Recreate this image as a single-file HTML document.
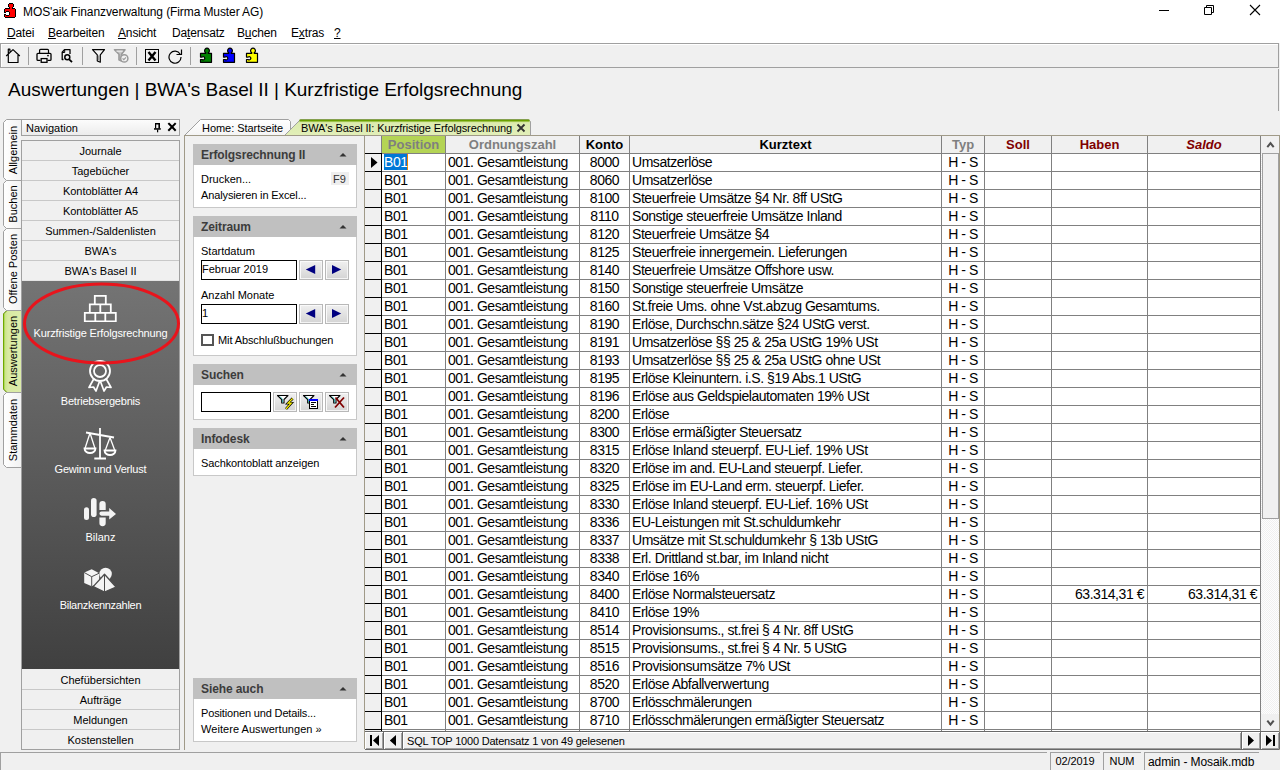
<!DOCTYPE html>
<html><head><meta charset="utf-8"><title>MOS'aik</title>
<style>
*{box-sizing:border-box;margin:0;padding:0}
html,body{width:1280px;height:770px;overflow:hidden;background:#f0f0f0;font-family:"Liberation Sans",sans-serif;color:#000}
.a{position:absolute}
.t{position:absolute;white-space:pre;line-height:1}
u{text-decoration:underline;text-decoration-thickness:1px;text-underline-offset:1px}
</style></head><body>

<div class="a" style="left:0;top:0;width:1280px;height:43px;background:#fff"></div>
<svg class="a" style="left:0;top:0" width="20" height="20" viewBox="0 0 20 20" shape-rendering="crispEdges"><path d="M5.5 8.5H9.5V7.5L8.5 6.5V4.5L9.5 3.5H12.5L13.5 4.5V6.5L12.5 7.5V8.5H14.5L15.5 9.5V16.5L14.5 17.5H5.5L4.5 16.5V14.5H5.5L6.5 15.5H8.5L9.5 14.5V12.5L8.5 11.5H6.5L5.5 12.5H4.5V9.5Z" fill="#f00" stroke="#000" stroke-width="1"/></svg>
<div class="t" style="left:23px;top:6px;font-size:12px;letter-spacing:-0.1px">MOS'aik Finanzverwaltung (Firma Muster AG)</div>
<div class="a" style="left:1159px;top:10px;width:10px;height:1px;background:#000"></div>
<svg class="a" style="left:1203px;top:4px" width="12" height="12" viewBox="0 0 12 12"><path d="M1.5 3.5h7v7h-7z M3.5 3.5v-2h7v7h-2" fill="none" stroke="#000" stroke-width="1"/></svg>
<svg class="a" style="left:1249px;top:4px" width="12" height="12" viewBox="0 0 12 12"><path d="M1 1L11 11M11 1L1 11" stroke="#000" stroke-width="1.1"/></svg>
<div class="t" style="left:7px;top:27px;font-size:12px;letter-spacing:-0.15px;line-height:13px"><u>D</u>atei</div>
<div class="t" style="left:48px;top:27px;font-size:12px;letter-spacing:-0.15px;line-height:13px"><u>B</u>earbeiten</div>
<div class="t" style="left:118px;top:27px;font-size:12px;letter-spacing:-0.15px;line-height:13px"><u>A</u>nsicht</div>
<div class="t" style="left:172px;top:27px;font-size:12px;letter-spacing:-0.15px;line-height:13px">Da<u>t</u>ensatz</div>
<div class="t" style="left:237px;top:27px;font-size:12px;letter-spacing:-0.15px;line-height:13px">B<u>u</u>chen</div>
<div class="t" style="left:291px;top:27px;font-size:12px;letter-spacing:-0.15px;line-height:13px">E<u>x</u>tras</div>
<div class="t" style="left:334px;top:27px;font-size:12px;letter-spacing:-0.15px;line-height:13px"><u>?</u></div>
<div class="a" style="left:0;top:43px;width:1279px;height:25px;border:1px solid #a0a0a0;background:#f0f0f0;box-shadow:inset 1px 1px #fff"></div>
<div class="a" style="left:28px;top:47px;width:1px;height:18px;background:#a0a0a0"></div>
<div class="a" style="left:82px;top:47px;width:1px;height:18px;background:#a0a0a0"></div>
<div class="a" style="left:136px;top:47px;width:1px;height:18px;background:#a0a0a0"></div>
<div class="a" style="left:190px;top:47px;width:1px;height:18px;background:#a0a0a0"></div>
<svg class="a" style="left:5px;top:48px" width="16" height="16" viewBox="0 0 16 16"><path d="M1.2 8L8 1.6 14.8 8 M3.3 6.2v8.3h9.7v-8.2 M3.3 6.2v-5h1.6v2.4" fill="none" stroke="#000" stroke-width="1.2" stroke-linejoin="round"/></svg>
<svg class="a" style="left:36px;top:48px" width="16" height="16" viewBox="0 0 16 16"><path d="M3.6 5.2V2.3a1 1 0 0 1 1-1h6.9a1 1 0 0 1 1 1v2.9" fill="none" stroke="#000" stroke-width="1.2"/><path d="M4.5 12.4H2a1 1 0 0 1-1-1V6.3a1 1 0 0 1 1-1h12a1 1 0 0 1 1 1v5.1a1 1 0 0 1-1 1h-2.5" fill="none" stroke="#000" stroke-width="1.3"/><rect x="5.2" y="10.6" width="5.8" height="3.7" fill="#fff" stroke="#000" stroke-width="1.3"/><circle cx="12" cy="7.6" r="0.9" fill="#000"/></svg>
<svg class="a" style="left:60px;top:48px" width="16" height="16" viewBox="0 0 16 16"><path d="M3.5 11.5H2.2V4.2L4.5 1.6H10V6" fill="none" stroke="#000" stroke-width="1.3" stroke-linejoin="round"/><path d="M2.2 4.5h2.5V1.6" fill="none" stroke="#000" stroke-width="1"/><circle cx="7.3" cy="9.3" r="2.5" fill="none" stroke="#000" stroke-width="1.5"/><path d="M9.2 11.3l2.8 2.8" stroke="#000" stroke-width="1.8"/></svg>
<svg class="a" style="left:91px;top:48px" width="16" height="16" viewBox="0 0 16 16"><path d="M1.5 1.6h12l-4.2 5.2v7.4l-3-1.2v-6.2z" fill="#f4f4f4" stroke="#000" stroke-width="1.2" stroke-linejoin="round"/><path d="M6.8 7.5h2v5.5l-2-0.8z" fill="#999"/></svg>
<svg class="a" style="left:113px;top:48px" width="16" height="16" viewBox="0 0 16 16"><path d="M1.5 1.8h10.5l-3.5 4.5v6.8l-2.5-1.2v-5.6z" fill="#c8c8c8" stroke="#9a9a9a" stroke-width="1.6" stroke-linejoin="round"/><path d="M3.5 3.2h6.2" stroke="#f0f0f0" stroke-width="1"/><circle cx="11.3" cy="10.4" r="3.6" fill="#f0f0f0" stroke="#9a9a9a" stroke-width="1.5"/><path d="M9.6 10.4l1.2 1.3 2.2-2.4" fill="none" stroke="#9a9a9a" stroke-width="1.1"/></svg>
<svg class="a" style="left:144px;top:48px" width="16" height="16" viewBox="0 0 16 16"><rect x="1.5" y="1.5" width="13" height="13" fill="none" stroke="#000" stroke-width="1"/><path d="M4.5 4l7 8.5M11.5 4l-7 8.5" stroke="#000" stroke-width="2.4"/></svg>
<svg class="a" style="left:167px;top:48px" width="16" height="16" viewBox="0 0 16 16"><path d="M13.2 6.2A6 6 0 1 0 14 9" fill="none" stroke="#000" stroke-width="1.2"/><path d="M14.5 1.5v5h-5" fill="none" stroke="#000" stroke-width="1.2"/></svg>
<svg class="a" style="left:199px;top:47px" width="14" height="17" viewBox="0 0 14 17"><path d="M1.5 6.3h5.3v-0.6a2.4 2.4 0 1 1 2.4 0v0.6h3.3v9h-11v-2.8h1.6a1.6 1.6 0 1 0 0-2.4h-1.6z" fill="#008000" stroke="#000" stroke-width="1.2" stroke-linejoin="round"/></svg>
<svg class="a" style="left:222px;top:47px" width="14" height="17" viewBox="0 0 14 17"><path d="M1.5 6.3h5.3v-0.6a2.4 2.4 0 1 1 2.4 0v0.6h3.3v9h-11v-2.8h1.6a1.6 1.6 0 1 0 0-2.4h-1.6z" fill="#0000ff" stroke="#000" stroke-width="1.2" stroke-linejoin="round"/></svg>
<svg class="a" style="left:245px;top:47px" width="14" height="17" viewBox="0 0 14 17"><path d="M1.5 6.3h5.3v-0.6a2.4 2.4 0 1 1 2.4 0v0.6h3.3v9h-11v-2.8h1.6a1.6 1.6 0 1 0 0-2.4h-1.6z" fill="#ffff00" stroke="#000" stroke-width="1.2" stroke-linejoin="round"/></svg>
<div class="t" style="left:8px;top:80px;font-size:19px;letter-spacing:-0.02px">Auswertungen | BWA's Basel II | Kurzfristige Erfolgsrechnung</div>
<div class="a" style="left:1278px;top:69px;width:1px;height:42px;background:#a0a0a0"></div>
<svg class="a" style="left:0;top:110px" width="24" height="370" viewBox="0 110 24 370"><defs><linearGradient id="vg" x1="0" x2="1"><stop offset="0" stop-color="#ffffff"/><stop offset="1" stop-color="#f2f2f2"/></linearGradient><linearGradient id="vga" x1="0" x2="1"><stop offset="0" stop-color="#c4e07a"/><stop offset="0.25" stop-color="#d8eaa2"/><stop offset="1" stop-color="#dcecaa"/></linearGradient></defs><path d="M21.5 119.5H6.5L3.5 122.5V177.5L6.5 180.5H21.5" fill="url(#vg)" stroke="#a0a0a0" stroke-width="1"/><path d="M21.5 180.5H6.5L3.5 183.5V225.5L6.5 228.5H21.5" fill="url(#vg)" stroke="#a0a0a0" stroke-width="1"/><path d="M21.5 228.5H6.5L3.5 231.5V307.5L6.5 310.5H21.5" fill="url(#vg)" stroke="#a0a0a0" stroke-width="1"/><path d="M21.5 392.5H6.5L3.5 395.5V464.5L6.5 467.5H21.5" fill="url(#vg)" stroke="#a0a0a0" stroke-width="1"/><path d="M21.5 310.5H6.5L3.5 313.5V389.5L6.5 392.5H21.5" fill="url(#vga)" stroke="#a0a0a0" stroke-width="1"/><path d="M6.5 311L3.5 314V389L6.5 392" fill="none" stroke="#70a800" stroke-width="1"/><path d="M4.5 314V389" fill="none" stroke="#b0d860" stroke-width="1"/></svg>
<div class="t" style="left:12.5px;top:149.5px;font-size:11px;transform:translate(-50%,-50%) rotate(-90deg);transform-origin:center;line-height:12px;">Allgemein</div>
<div class="t" style="left:12.5px;top:204.0px;font-size:11px;transform:translate(-50%,-50%) rotate(-90deg);transform-origin:center;line-height:12px;">Buchen</div>
<div class="t" style="left:12.5px;top:269.0px;font-size:11px;transform:translate(-50%,-50%) rotate(-90deg);transform-origin:center;line-height:12px;">Offene Posten</div>
<div class="t" style="left:12.5px;top:351.0px;font-size:11px;transform:translate(-50%,-50%) rotate(-90deg);transform-origin:center;line-height:12px;">Auswertungen</div>
<div class="t" style="left:12.5px;top:429.5px;font-size:11px;transform:translate(-50%,-50%) rotate(-90deg);transform-origin:center;line-height:12px;">Stammdaten</div>
<div class="a" style="left:21px;top:119px;width:159px;height:17px;border:1px solid #a0a0a0;background:linear-gradient(#fcfcfc,#ececec)"></div>
<div class="t" style="left:26px;top:123px;font-size:11px">Navigation</div>
<svg class="a" style="left:153px;top:122px" width="9" height="11" viewBox="0 0 9 11"><path d="M2 1h5v5.5h-1.6v-4h-2.2v4h-1.2z" fill="#000"/><rect x="1" y="6.2" width="6.8" height="1.5" fill="#000"/><rect x="4" y="7.5" width="1.2" height="2.8" fill="#000"/></svg>
<svg class="a" style="left:167px;top:122px" width="10" height="10" viewBox="0 0 10 10"><path d="M2 1.8l6 6.2M8 1.8l-6 6.2" stroke="#000" stroke-width="2" stroke-linecap="square"/></svg>
<div class="a" style="left:21px;top:140px;width:159px;height:610px;border:1px solid #a0a0a0;background:#f0f0f0"></div>
<div class="t" style="left:22px;top:146px;width:157px;text-align:center;font-size:11px">Journale</div>
<div class="a" style="left:22px;top:160px;width:157px;height:1px;background:#c8c8c8"></div>
<div class="t" style="left:22px;top:166px;width:157px;text-align:center;font-size:11px">Tagebücher</div>
<div class="a" style="left:22px;top:180px;width:157px;height:1px;background:#c8c8c8"></div>
<div class="t" style="left:22px;top:186px;width:157px;text-align:center;font-size:11px">Kontoblätter A4</div>
<div class="a" style="left:22px;top:200px;width:157px;height:1px;background:#c8c8c8"></div>
<div class="t" style="left:22px;top:206px;width:157px;text-align:center;font-size:11px">Kontoblätter A5</div>
<div class="a" style="left:22px;top:220px;width:157px;height:1px;background:#c8c8c8"></div>
<div class="t" style="left:22px;top:226px;width:157px;text-align:center;font-size:11px">Summen-/Saldenlisten</div>
<div class="a" style="left:22px;top:240px;width:157px;height:1px;background:#c8c8c8"></div>
<div class="t" style="left:22px;top:246px;width:157px;text-align:center;font-size:11px">BWA's</div>
<div class="a" style="left:22px;top:260px;width:157px;height:1px;background:#c8c8c8"></div>
<div class="t" style="left:22px;top:266px;width:157px;text-align:center;font-size:11px">BWA's Basel II</div>
<div class="a" style="left:22px;top:280px;width:157px;height:1px;background:#e4e4e4"></div>
<div class="a" style="left:22px;top:281px;width:157px;height:388px;background:linear-gradient(#747474,#404040)"></div>
<div class="t" style="left:22px;top:675px;width:157px;text-align:center;font-size:11px">Chefübersichten</div>
<div class="a" style="left:22px;top:689px;width:157px;height:1px;background:#c8c8c8"></div>
<div class="t" style="left:22px;top:695px;width:157px;text-align:center;font-size:11px">Aufträge</div>
<div class="a" style="left:22px;top:709px;width:157px;height:1px;background:#c8c8c8"></div>
<div class="t" style="left:22px;top:715px;width:157px;text-align:center;font-size:11px">Meldungen</div>
<div class="a" style="left:22px;top:729px;width:157px;height:1px;background:#c8c8c8"></div>
<div class="t" style="left:22px;top:735px;width:157px;text-align:center;font-size:11px">Kostenstellen</div>
<svg class="a" style="left:83px;top:294px" width="34" height="28" viewBox="0 0 34 28"><path d="M11.8 1.8h11v8.5h-11z M6.8 10.3h21v8.5h-21z M1.8 18.8h31v8.5h-31z M17.3 10.3v8.5 M12.3 18.8v8.5 M22.3 18.8v8.5" fill="none" stroke="#fff" stroke-width="1.8"/></svg>
<div class="t" style="left:22px;top:328px;width:157px;text-align:center;font-size:11px;color:#fff;letter-spacing:-0.15px">Kurzfristige Erfolgsrechnung</div>
<svg class="a" style="left:86px;top:359px" width="28" height="34" viewBox="0 0 28 34"><circle cx="14" cy="12" r="10" fill="none" stroke="#fff" stroke-width="1.8"/><circle cx="14" cy="12" r="6" fill="none" stroke="#fff" stroke-width="1.8"/><path d="M8 19.5l-5 9 4.5-0.5 2.5 4 3.5-9.5 M20 19.5l5 9-4.5-0.5-2.5 4-3.5-9.5" fill="none" stroke="#fff" stroke-width="1.7" stroke-linejoin="round"/></svg>
<div class="t" style="left:22px;top:396px;width:157px;text-align:center;font-size:11px;color:#fff;letter-spacing:-0.2px">Betriebsergebnis</div>
<svg class="a" style="left:83px;top:427px" width="34" height="34" viewBox="0 0 34 34"><path d="M17 1v30 M11.3 31.5h11.7 M3 5.5l28 5" fill="none" stroke="#fff" stroke-width="1.8"/><path d="M7 6l-5 15.5 M7 6l5 15.5 M27 10.5l-5 13.5 M27 10.5l5 13.5" fill="none" stroke="#fff" stroke-width="1.3"/><path d="M1.5 21.5h11a5.5 4.5 0 0 1-11 0z M21.5 23.5h11a5.5 4.5 0 0 1-11 0z" fill="none" stroke="#fff" stroke-width="1.8"/></svg>
<div class="t" style="left:22px;top:464px;width:157px;text-align:center;font-size:11px;color:#fff;letter-spacing:-0.2px">Gewinn und Verlust</div>
<svg class="a" style="left:83px;top:497px" width="34" height="31" viewBox="0 0 34 31"><rect x="1" y="10.3" width="5" height="12.6" rx="2.5" fill="#f4f4f4"/><rect x="8" y="1" width="5.6" height="19.1" rx="2.8" fill="#f4f4f4"/><path d="M16.4 13.1v-6a3.15 3.15 0 0 1 6.3 0v6z M16.4 20.6h6.3v5.5a3.15 3.15 0 0 1-6.3 0z M18.5 14.5h7.7v4.2h-7.7a2.1 2.1 0 0 1 0-4.2z M26.2 11l6.8 5.9-6.8 5.6z" fill="#f4f4f4"/></svg>
<div class="t" style="left:22px;top:532px;width:157px;text-align:center;font-size:11px;color:#fff">Bilanz</div>
<svg class="a" style="left:83px;top:567px" width="34" height="27" viewBox="0 0 34 27"><circle cx="22.6" cy="7" r="6.2" fill="#f4f4f4"/><path d="M1.2 5.5L8.7 2.2 16.2 6.2 16.2 16 8.7 19.2 1.2 15.9z" fill="#f4f4f4"/><path d="M1.2 5.5L8.7 9.7 16.2 6.2M8.7 9.7v9.5" fill="none" stroke="#505050" stroke-width="1"/><path d="M21.5 7.3L10.2 19.6 21.5 25.1 33 20z" fill="#f4f4f4" stroke="#4c4c4c" stroke-width="1.3" stroke-linejoin="round"/><path d="M21.5 7.3v17.8" stroke="#4c4c4c" stroke-width="1"/></svg>
<div class="t" style="left:22px;top:600px;width:157px;text-align:center;font-size:11px;color:#fff;letter-spacing:-0.3px">Bilanzkennzahlen</div>
<svg class="a" style="left:20px;top:280px" width="164" height="88" viewBox="0 0 164 88"><ellipse cx="81.5" cy="43.5" rx="77" ry="39.5" fill="none" stroke="#e8141c" stroke-width="3"/></svg>
<svg class="a" style="left:182px;top:118px" width="360" height="19" viewBox="0 0 360 19">
<defs><linearGradient id="hg" x1="0" y1="0" x2="0" y2="1"><stop offset="0" stop-color="#ffffff"/><stop offset="1" stop-color="#f4f4f4"/></linearGradient>
<linearGradient id="gg" x1="0" y1="0" x2="0" y2="1"><stop offset="0" stop-color="#c6e07a"/><stop offset="0.25" stop-color="#dcebb0"/><stop offset="1" stop-color="#e2efb8"/></linearGradient></defs>
<path d="M2.5 17.5L18.5 1.5h88l2 2v14" fill="url(#hg)" stroke="#a0a0a0" stroke-width="1"/>
<path d="M102.5 17.5L118.5 1.5h228l2 2v14" fill="url(#gg)" stroke="#a0a0a0" stroke-width="1"/>
<path d="M117.5 2.5h230" stroke="#6aa000" stroke-width="2"/>
</svg>
<div class="t" style="left:202px;top:123px;font-size:11px;letter-spacing:-0.05px">Home: Startseite</div>
<div class="t" style="left:301px;top:123px;font-size:11px;letter-spacing:-0.12px">BWA's Basel II: Kurzfristige Erfolgsrechnung</div>
<svg class="a" style="left:516px;top:123px" width="10" height="10" viewBox="0 0 10 10"><path d="M1.5 1.5l7 7M8.5 1.5l-7 7" stroke="#333" stroke-width="1.8"/></svg>
<div class="a" style="left:184px;top:135px;width:1096px;height:615px;border:1px solid #a09a88;border-bottom:none"></div>
<div class="a" style="left:193px;top:144px;width:164px;height:21px;background:#c0c0c0"></div>
<div class="t" style="left:201px;top:149px;font-size:12px;font-weight:bold;color:#3c3c3c;letter-spacing:-0.1px">Erfolgsrechnung II</div>
<svg class="a" style="left:339px;top:152px" width="8" height="5" viewBox="0 0 8 5"><path d="M0.5 4.5L4 1l3.5 3.5z" fill="#333"/></svg>
<div class="a" style="left:193px;top:165px;width:164px;height:43px;background:#fff;border:1px solid #c8c8c8;border-top:none"></div>
<div class="t" style="left:201px;top:174px;font-size:11px">Drucken...</div>
<div class="a" style="left:331px;top:172px;width:18px;height:13px;background:#eeeeee"></div>
<div class="t" style="left:333px;top:174px;font-size:11px;color:#333">F9</div>
<div class="t" style="left:201px;top:190px;font-size:11px;letter-spacing:-0.12px">Analysieren in Excel...</div>
<div class="a" style="left:193px;top:216px;width:164px;height:21px;background:#c0c0c0"></div>
<div class="t" style="left:201px;top:221px;font-size:12px;font-weight:bold;color:#3c3c3c;letter-spacing:-0.1px">Zeitraum</div>
<svg class="a" style="left:339px;top:224px" width="8" height="5" viewBox="0 0 8 5"><path d="M0.5 4.5L4 1l3.5 3.5z" fill="#333"/></svg>
<div class="a" style="left:193px;top:237px;width:164px;height:119px;background:#fff;border:1px solid #c8c8c8;border-top:none"></div>
<div class="t" style="left:201px;top:246px;font-size:11px">Startdatum</div>
<div class="a" style="left:201px;top:260px;width:96px;height:20px;border:1px solid #000;background:#fff"></div>
<div class="a" style="left:299px;top:260px;width:24px;height:20px;border:1px solid #b8b8b8;box-shadow:inset 1px 1px #fafafa,inset -1px -1px #f4f4f4;background:linear-gradient(#f0f0f0,#d4d4d4)"></div>
<svg class="a" style="left:301px;top:260px" width="20" height="20" viewBox="0 0 20 20"><path d="M14.2 4.9L4.8 9.5 14.2 14z" fill="#000080"/></svg>
<div class="a" style="left:325px;top:260px;width:24px;height:20px;border:1px solid #b8b8b8;box-shadow:inset 1px 1px #fafafa,inset -1px -1px #f4f4f4;background:linear-gradient(#f0f0f0,#d4d4d4)"></div>
<svg class="a" style="left:327px;top:260px" width="20" height="20" viewBox="0 0 20 20"><path d="M5 4.9L14.2 9.5 5 14z" fill="#000080"/></svg>
<div class="t" style="left:202px;top:264px;font-size:11px">Februar 2019</div>
<div class="t" style="left:201px;top:290px;font-size:11px">Anzahl Monate</div>
<div class="a" style="left:201px;top:304px;width:96px;height:20px;border:1px solid #000;background:#fff"></div>
<div class="a" style="left:299px;top:304px;width:24px;height:20px;border:1px solid #b8b8b8;box-shadow:inset 1px 1px #fafafa,inset -1px -1px #f4f4f4;background:linear-gradient(#f0f0f0,#d4d4d4)"></div>
<svg class="a" style="left:301px;top:304px" width="20" height="20" viewBox="0 0 20 20"><path d="M14.2 4.9L4.8 9.5 14.2 14z" fill="#000080"/></svg>
<div class="a" style="left:325px;top:304px;width:24px;height:20px;border:1px solid #b8b8b8;box-shadow:inset 1px 1px #fafafa,inset -1px -1px #f4f4f4;background:linear-gradient(#f0f0f0,#d4d4d4)"></div>
<svg class="a" style="left:327px;top:304px" width="20" height="20" viewBox="0 0 20 20"><path d="M5 4.9L14.2 9.5 5 14z" fill="#000080"/></svg>
<div class="t" style="left:202px;top:308px;font-size:11px">1</div>
<div class="a" style="left:201px;top:334px;width:13px;height:12px;border:2px solid #555;background:#fff"></div>
<div class="t" style="left:218px;top:335px;font-size:11px;letter-spacing:-0.1px">Mit Abschlußbuchungen</div>
<div class="a" style="left:193px;top:364px;width:164px;height:21px;background:#c0c0c0"></div>
<div class="t" style="left:201px;top:369px;font-size:12px;font-weight:bold;color:#3c3c3c;letter-spacing:-0.1px">Suchen</div>
<svg class="a" style="left:339px;top:372px" width="8" height="5" viewBox="0 0 8 5"><path d="M0.5 4.5L4 1l3.5 3.5z" fill="#333"/></svg>
<div class="a" style="left:193px;top:385px;width:164px;height:35px;background:#fff;border:1px solid #c8c8c8;border-top:none"></div>
<div class="a" style="left:201px;top:392px;width:70px;height:20px;border:1px solid #000;background:#fff"></div>
<div class="a" style="left:273px;top:392px;width:24px;height:20px;border:1px solid #b8b8b8;box-shadow:inset 1px 1px #fafafa,inset -1px -1px #f4f4f4;background:linear-gradient(#f0f0f0,#d4d4d4)"></div>
<div class="a" style="left:299px;top:392px;width:24px;height:20px;border:1px solid #b8b8b8;box-shadow:inset 1px 1px #fafafa,inset -1px -1px #f4f4f4;background:linear-gradient(#f0f0f0,#d4d4d4)"></div>
<div class="a" style="left:325px;top:392px;width:24px;height:20px;border:1px solid #b8b8b8;box-shadow:inset 1px 1px #fafafa,inset -1px -1px #f4f4f4;background:linear-gradient(#f0f0f0,#d4d4d4)"></div>
<svg class="a" style="left:273px;top:388px" width="24" height="26" viewBox="0 0 24 26"><path d="M4.5 7.5h10.5l-4 4v3.5h-2.3v-3.5z" fill="#fff" stroke="#000" stroke-width="1.1" stroke-linejoin="round"/><path d="M7 8.6l2.6 2.9v3" fill="none" stroke="#2aa8a8" stroke-width="1"/><path d="M19.6 10.5L15 15.2h3.2L13 21" fill="none" stroke="#000" stroke-width="2.6" stroke-linejoin="miter"/><path d="M19.6 10.5L15 15.2h3.2L13 21" fill="none" stroke="#f8f000" stroke-width="1.2"/></svg>
<svg class="a" style="left:299px;top:388px" width="24" height="26" viewBox="0 0 24 26"><path d="M4.5 7.5h10.5l-4 4v3.5h-2.3v-3.5z" fill="#fff" stroke="#000" stroke-width="1.1" stroke-linejoin="round"/><path d="M7 8.6l2.6 2.9v3" fill="none" stroke="#2aa8a8" stroke-width="1"/><rect x="10.5" y="11.5" width="8" height="9" fill="#fff" stroke="#000" stroke-width="1"/><rect x="10" y="11" width="9" height="2" fill="#0000ff"/><path d="M12 14.5h5M12 16.5h3M12 18.5h5" stroke="#000" stroke-width="1"/></svg>
<svg class="a" style="left:325px;top:388px" width="24" height="26" viewBox="0 0 24 26"><path d="M4.5 7.5h10.5l-4 4v3.5h-2.3v-3.5z" fill="#fff" stroke="#000" stroke-width="1.1" stroke-linejoin="round"/><path d="M7 8.6l2.6 2.9v3" fill="none" stroke="#2aa8a8" stroke-width="1"/><path d="M10 19.5l9-10M10.5 9.5l8.5 10" stroke="#800000" stroke-width="1.8"/></svg>
<div class="a" style="left:193px;top:428px;width:164px;height:21px;background:#c0c0c0"></div>
<div class="t" style="left:201px;top:433px;font-size:12px;font-weight:bold;color:#3c3c3c;letter-spacing:-0.1px">Infodesk</div>
<svg class="a" style="left:339px;top:436px" width="8" height="5" viewBox="0 0 8 5"><path d="M0.5 4.5L4 1l3.5 3.5z" fill="#333"/></svg>
<div class="a" style="left:193px;top:449px;width:164px;height:27px;background:#fff;border:1px solid #c8c8c8;border-top:none"></div>
<div class="t" style="left:201px;top:458px;font-size:11px;letter-spacing:-0.1px">Sachkontoblatt anzeigen</div>
<div class="a" style="left:193px;top:678px;width:164px;height:21px;background:#c0c0c0"></div>
<div class="t" style="left:201px;top:683px;font-size:12px;font-weight:bold;color:#3c3c3c;letter-spacing:-0.1px">Siehe auch</div>
<svg class="a" style="left:339px;top:686px" width="8" height="5" viewBox="0 0 8 5"><path d="M0.5 4.5L4 1l3.5 3.5z" fill="#333"/></svg>
<div class="a" style="left:193px;top:699px;width:164px;height:43px;background:#fff;border:1px solid #c8c8c8;border-top:none"></div>
<div class="t" style="left:201px;top:708px;font-size:11px;letter-spacing:-0.15px">Positionen und Details...</div>
<div class="t" style="left:201px;top:724px;font-size:11px;letter-spacing:0.05px">Weitere Auswertungen »</div>
<div class="a" style="left:364px;top:136px;width:1px;height:613px;background:#a09a88"></div>
<div class="a" style="left:382px;top:136px;width:878px;height:595px;background:#fff"></div>
<div class="a" style="left:365px;top:136px;width:895px;height:17px;background:#f0f0f0"></div>
<div class="a" style="left:382px;top:136px;width:63px;height:17px;background:#b4d455"></div>
<div class="a" style="left:365px;top:153px;width:16px;height:578px;background:#f0f0f0"></div>
<div class="a" style="left:365px;top:153px;width:16px;height:1px;background:#000"></div>
<div class="a" style="left:382px;top:153px;width:878px;height:1px;background:#808080"></div>
<div class="a" style="left:365px;top:171px;width:16px;height:1px;background:#000"></div>
<div class="a" style="left:382px;top:171px;width:878px;height:1px;background:#808080"></div>
<div class="a" style="left:365px;top:189px;width:16px;height:1px;background:#000"></div>
<div class="a" style="left:382px;top:189px;width:878px;height:1px;background:#808080"></div>
<div class="a" style="left:365px;top:207px;width:16px;height:1px;background:#000"></div>
<div class="a" style="left:382px;top:207px;width:878px;height:1px;background:#808080"></div>
<div class="a" style="left:365px;top:225px;width:16px;height:1px;background:#000"></div>
<div class="a" style="left:382px;top:225px;width:878px;height:1px;background:#808080"></div>
<div class="a" style="left:365px;top:243px;width:16px;height:1px;background:#000"></div>
<div class="a" style="left:382px;top:243px;width:878px;height:1px;background:#808080"></div>
<div class="a" style="left:365px;top:261px;width:16px;height:1px;background:#000"></div>
<div class="a" style="left:382px;top:261px;width:878px;height:1px;background:#808080"></div>
<div class="a" style="left:365px;top:279px;width:16px;height:1px;background:#000"></div>
<div class="a" style="left:382px;top:279px;width:878px;height:1px;background:#808080"></div>
<div class="a" style="left:365px;top:297px;width:16px;height:1px;background:#000"></div>
<div class="a" style="left:382px;top:297px;width:878px;height:1px;background:#808080"></div>
<div class="a" style="left:365px;top:315px;width:16px;height:1px;background:#000"></div>
<div class="a" style="left:382px;top:315px;width:878px;height:1px;background:#808080"></div>
<div class="a" style="left:365px;top:333px;width:16px;height:1px;background:#000"></div>
<div class="a" style="left:382px;top:333px;width:878px;height:1px;background:#808080"></div>
<div class="a" style="left:365px;top:351px;width:16px;height:1px;background:#000"></div>
<div class="a" style="left:382px;top:351px;width:878px;height:1px;background:#808080"></div>
<div class="a" style="left:365px;top:369px;width:16px;height:1px;background:#000"></div>
<div class="a" style="left:382px;top:369px;width:878px;height:1px;background:#808080"></div>
<div class="a" style="left:365px;top:387px;width:16px;height:1px;background:#000"></div>
<div class="a" style="left:382px;top:387px;width:878px;height:1px;background:#808080"></div>
<div class="a" style="left:365px;top:405px;width:16px;height:1px;background:#000"></div>
<div class="a" style="left:382px;top:405px;width:878px;height:1px;background:#808080"></div>
<div class="a" style="left:365px;top:423px;width:16px;height:1px;background:#000"></div>
<div class="a" style="left:382px;top:423px;width:878px;height:1px;background:#808080"></div>
<div class="a" style="left:365px;top:441px;width:16px;height:1px;background:#000"></div>
<div class="a" style="left:382px;top:441px;width:878px;height:1px;background:#808080"></div>
<div class="a" style="left:365px;top:459px;width:16px;height:1px;background:#000"></div>
<div class="a" style="left:382px;top:459px;width:878px;height:1px;background:#808080"></div>
<div class="a" style="left:365px;top:477px;width:16px;height:1px;background:#000"></div>
<div class="a" style="left:382px;top:477px;width:878px;height:1px;background:#808080"></div>
<div class="a" style="left:365px;top:495px;width:16px;height:1px;background:#000"></div>
<div class="a" style="left:382px;top:495px;width:878px;height:1px;background:#808080"></div>
<div class="a" style="left:365px;top:513px;width:16px;height:1px;background:#000"></div>
<div class="a" style="left:382px;top:513px;width:878px;height:1px;background:#808080"></div>
<div class="a" style="left:365px;top:531px;width:16px;height:1px;background:#000"></div>
<div class="a" style="left:382px;top:531px;width:878px;height:1px;background:#808080"></div>
<div class="a" style="left:365px;top:549px;width:16px;height:1px;background:#000"></div>
<div class="a" style="left:382px;top:549px;width:878px;height:1px;background:#808080"></div>
<div class="a" style="left:365px;top:567px;width:16px;height:1px;background:#000"></div>
<div class="a" style="left:382px;top:567px;width:878px;height:1px;background:#808080"></div>
<div class="a" style="left:365px;top:585px;width:16px;height:1px;background:#000"></div>
<div class="a" style="left:382px;top:585px;width:878px;height:1px;background:#808080"></div>
<div class="a" style="left:365px;top:603px;width:16px;height:1px;background:#000"></div>
<div class="a" style="left:382px;top:603px;width:878px;height:1px;background:#808080"></div>
<div class="a" style="left:365px;top:621px;width:16px;height:1px;background:#000"></div>
<div class="a" style="left:382px;top:621px;width:878px;height:1px;background:#808080"></div>
<div class="a" style="left:365px;top:639px;width:16px;height:1px;background:#000"></div>
<div class="a" style="left:382px;top:639px;width:878px;height:1px;background:#808080"></div>
<div class="a" style="left:365px;top:657px;width:16px;height:1px;background:#000"></div>
<div class="a" style="left:382px;top:657px;width:878px;height:1px;background:#808080"></div>
<div class="a" style="left:365px;top:675px;width:16px;height:1px;background:#000"></div>
<div class="a" style="left:382px;top:675px;width:878px;height:1px;background:#808080"></div>
<div class="a" style="left:365px;top:693px;width:16px;height:1px;background:#000"></div>
<div class="a" style="left:382px;top:693px;width:878px;height:1px;background:#808080"></div>
<div class="a" style="left:365px;top:711px;width:16px;height:1px;background:#000"></div>
<div class="a" style="left:382px;top:711px;width:878px;height:1px;background:#808080"></div>
<div class="a" style="left:365px;top:729px;width:16px;height:1px;background:#000"></div>
<div class="a" style="left:382px;top:729px;width:878px;height:1px;background:#808080"></div>
<div class="a" style="left:381px;top:153px;width:1px;height:578px;background:#000"></div>
<div class="a" style="left:381px;top:136px;width:1px;height:17px;background:#808080"></div>
<div class="a" style="left:445px;top:136px;width:1px;height:595px;background:#808080"></div>
<div class="a" style="left:579px;top:136px;width:1px;height:595px;background:#808080"></div>
<div class="a" style="left:629px;top:136px;width:1px;height:595px;background:#808080"></div>
<div class="a" style="left:941px;top:136px;width:1px;height:595px;background:#808080"></div>
<div class="a" style="left:984px;top:136px;width:1px;height:595px;background:#808080"></div>
<div class="a" style="left:1051px;top:136px;width:1px;height:595px;background:#808080"></div>
<div class="a" style="left:1147px;top:136px;width:1px;height:595px;background:#808080"></div>
<div class="a" style="left:1260px;top:136px;width:1px;height:595px;background:#808080"></div>
<div class="t" style="left:382px;top:138px;width:63px;text-align:center;font-size:13px;font-weight:bold;color:#7f7f7f;">Position</div>
<div class="t" style="left:446px;top:138px;width:133px;text-align:center;font-size:13px;font-weight:bold;color:#7f7f7f;">Ordnungszahl</div>
<div class="t" style="left:580px;top:138px;width:49px;text-align:center;font-size:13px;font-weight:bold;color:#000;">Konto</div>
<div class="t" style="left:630px;top:138px;width:311px;text-align:center;font-size:13px;font-weight:bold;color:#000;">Kurztext</div>
<div class="t" style="left:942px;top:138px;width:42px;text-align:center;font-size:13px;font-weight:bold;color:#7f7f7f;">Typ</div>
<div class="t" style="left:985px;top:138px;width:66px;text-align:center;font-size:13px;font-weight:bold;color:#800000;">Soll</div>
<div class="t" style="left:1052px;top:138px;width:95px;text-align:center;font-size:13px;font-weight:bold;color:#800000;">Haben</div>
<div class="t" style="left:1148px;top:138px;width:112px;text-align:center;font-size:13px;font-weight:bold;color:#800000;font-style:italic;">Saldo</div>
<div class="a" style="left:384px;top:154px;width:24px;height:16px;background:#0078d7"></div>
<div class="a" style="left:407px;top:154px;width:1px;height:16px;background:#f08000"></div>
<div class="t" style="left:384px;top:155px;font-size:14px;letter-spacing:-0.45px;color:#fff">B01</div>
<svg class="a" style="left:370px;top:156px" width="9" height="13" viewBox="0 0 9 13"><path d="M1 1l6.5 5.5L1 12z" fill="#000"/></svg>
<div class="t" style="left:448px;top:155px;font-size:14px;letter-spacing:-0.45px">001. Gesamtleistung</div>
<div class="t" style="left:580px;top:155px;width:49px;text-align:center;font-size:14px;letter-spacing:-0.45px">8000</div>
<div class="t" style="left:632px;top:155px;font-size:14px;letter-spacing:-0.45px">Umsatzerlöse</div>
<div class="t" style="left:942px;top:155px;width:42px;text-align:center;font-size:14px;letter-spacing:-0.45px">H - S</div>
<div class="t" style="left:384px;top:173px;font-size:14px;letter-spacing:-0.45px">B01</div>
<div class="t" style="left:448px;top:173px;font-size:14px;letter-spacing:-0.45px">001. Gesamtleistung</div>
<div class="t" style="left:580px;top:173px;width:49px;text-align:center;font-size:14px;letter-spacing:-0.45px">8060</div>
<div class="t" style="left:632px;top:173px;font-size:14px;letter-spacing:-0.45px">Umsatzerlöse</div>
<div class="t" style="left:942px;top:173px;width:42px;text-align:center;font-size:14px;letter-spacing:-0.45px">H - S</div>
<div class="t" style="left:384px;top:191px;font-size:14px;letter-spacing:-0.45px">B01</div>
<div class="t" style="left:448px;top:191px;font-size:14px;letter-spacing:-0.45px">001. Gesamtleistung</div>
<div class="t" style="left:580px;top:191px;width:49px;text-align:center;font-size:14px;letter-spacing:-0.45px">8100</div>
<div class="t" style="left:632px;top:191px;font-size:14px;letter-spacing:-0.45px">Steuerfreie Umsätze §4 Nr. 8ff UStG</div>
<div class="t" style="left:942px;top:191px;width:42px;text-align:center;font-size:14px;letter-spacing:-0.45px">H - S</div>
<div class="t" style="left:384px;top:209px;font-size:14px;letter-spacing:-0.45px">B01</div>
<div class="t" style="left:448px;top:209px;font-size:14px;letter-spacing:-0.45px">001. Gesamtleistung</div>
<div class="t" style="left:580px;top:209px;width:49px;text-align:center;font-size:14px;letter-spacing:-0.45px">8110</div>
<div class="t" style="left:632px;top:209px;font-size:14px;letter-spacing:-0.45px">Sonstige steuerfreie Umsätze Inland</div>
<div class="t" style="left:942px;top:209px;width:42px;text-align:center;font-size:14px;letter-spacing:-0.45px">H - S</div>
<div class="t" style="left:384px;top:227px;font-size:14px;letter-spacing:-0.45px">B01</div>
<div class="t" style="left:448px;top:227px;font-size:14px;letter-spacing:-0.45px">001. Gesamtleistung</div>
<div class="t" style="left:580px;top:227px;width:49px;text-align:center;font-size:14px;letter-spacing:-0.45px">8120</div>
<div class="t" style="left:632px;top:227px;font-size:14px;letter-spacing:-0.45px">Steuerfreie Umsätze §4</div>
<div class="t" style="left:942px;top:227px;width:42px;text-align:center;font-size:14px;letter-spacing:-0.45px">H - S</div>
<div class="t" style="left:384px;top:245px;font-size:14px;letter-spacing:-0.45px">B01</div>
<div class="t" style="left:448px;top:245px;font-size:14px;letter-spacing:-0.45px">001. Gesamtleistung</div>
<div class="t" style="left:580px;top:245px;width:49px;text-align:center;font-size:14px;letter-spacing:-0.45px">8125</div>
<div class="t" style="left:632px;top:245px;font-size:14px;letter-spacing:-0.45px">Steuerfreie innergemein. Lieferungen</div>
<div class="t" style="left:942px;top:245px;width:42px;text-align:center;font-size:14px;letter-spacing:-0.45px">H - S</div>
<div class="t" style="left:384px;top:263px;font-size:14px;letter-spacing:-0.45px">B01</div>
<div class="t" style="left:448px;top:263px;font-size:14px;letter-spacing:-0.45px">001. Gesamtleistung</div>
<div class="t" style="left:580px;top:263px;width:49px;text-align:center;font-size:14px;letter-spacing:-0.45px">8140</div>
<div class="t" style="left:632px;top:263px;font-size:14px;letter-spacing:-0.45px">Steuerfreie Umsätze Offshore usw.</div>
<div class="t" style="left:942px;top:263px;width:42px;text-align:center;font-size:14px;letter-spacing:-0.45px">H - S</div>
<div class="t" style="left:384px;top:281px;font-size:14px;letter-spacing:-0.45px">B01</div>
<div class="t" style="left:448px;top:281px;font-size:14px;letter-spacing:-0.45px">001. Gesamtleistung</div>
<div class="t" style="left:580px;top:281px;width:49px;text-align:center;font-size:14px;letter-spacing:-0.45px">8150</div>
<div class="t" style="left:632px;top:281px;font-size:14px;letter-spacing:-0.45px">Sonstige steuerfreie Umsätze</div>
<div class="t" style="left:942px;top:281px;width:42px;text-align:center;font-size:14px;letter-spacing:-0.45px">H - S</div>
<div class="t" style="left:384px;top:299px;font-size:14px;letter-spacing:-0.45px">B01</div>
<div class="t" style="left:448px;top:299px;font-size:14px;letter-spacing:-0.45px">001. Gesamtleistung</div>
<div class="t" style="left:580px;top:299px;width:49px;text-align:center;font-size:14px;letter-spacing:-0.45px">8160</div>
<div class="t" style="left:632px;top:299px;font-size:14px;letter-spacing:-0.45px">St.freie Ums. ohne Vst.abzug Gesamtums.</div>
<div class="t" style="left:942px;top:299px;width:42px;text-align:center;font-size:14px;letter-spacing:-0.45px">H - S</div>
<div class="t" style="left:384px;top:317px;font-size:14px;letter-spacing:-0.45px">B01</div>
<div class="t" style="left:448px;top:317px;font-size:14px;letter-spacing:-0.45px">001. Gesamtleistung</div>
<div class="t" style="left:580px;top:317px;width:49px;text-align:center;font-size:14px;letter-spacing:-0.45px">8190</div>
<div class="t" style="left:632px;top:317px;font-size:14px;letter-spacing:-0.45px">Erlöse, Durchschn.sätze §24 UStG verst.</div>
<div class="t" style="left:942px;top:317px;width:42px;text-align:center;font-size:14px;letter-spacing:-0.45px">H - S</div>
<div class="t" style="left:384px;top:335px;font-size:14px;letter-spacing:-0.45px">B01</div>
<div class="t" style="left:448px;top:335px;font-size:14px;letter-spacing:-0.45px">001. Gesamtleistung</div>
<div class="t" style="left:580px;top:335px;width:49px;text-align:center;font-size:14px;letter-spacing:-0.45px">8191</div>
<div class="t" style="left:632px;top:335px;font-size:14px;letter-spacing:-0.45px">Umsatzerlöse §§ 25 &amp; 25a UStG 19% USt</div>
<div class="t" style="left:942px;top:335px;width:42px;text-align:center;font-size:14px;letter-spacing:-0.45px">H - S</div>
<div class="t" style="left:384px;top:353px;font-size:14px;letter-spacing:-0.45px">B01</div>
<div class="t" style="left:448px;top:353px;font-size:14px;letter-spacing:-0.45px">001. Gesamtleistung</div>
<div class="t" style="left:580px;top:353px;width:49px;text-align:center;font-size:14px;letter-spacing:-0.45px">8193</div>
<div class="t" style="left:632px;top:353px;font-size:14px;letter-spacing:-0.45px">Umsatzerlöse §§ 25 &amp; 25a UStG ohne USt</div>
<div class="t" style="left:942px;top:353px;width:42px;text-align:center;font-size:14px;letter-spacing:-0.45px">H - S</div>
<div class="t" style="left:384px;top:371px;font-size:14px;letter-spacing:-0.45px">B01</div>
<div class="t" style="left:448px;top:371px;font-size:14px;letter-spacing:-0.45px">001. Gesamtleistung</div>
<div class="t" style="left:580px;top:371px;width:49px;text-align:center;font-size:14px;letter-spacing:-0.45px">8195</div>
<div class="t" style="left:632px;top:371px;font-size:14px;letter-spacing:-0.45px">Erlöse Kleinuntern. i.S. §19 Abs.1 UStG</div>
<div class="t" style="left:942px;top:371px;width:42px;text-align:center;font-size:14px;letter-spacing:-0.45px">H - S</div>
<div class="t" style="left:384px;top:389px;font-size:14px;letter-spacing:-0.45px">B01</div>
<div class="t" style="left:448px;top:389px;font-size:14px;letter-spacing:-0.45px">001. Gesamtleistung</div>
<div class="t" style="left:580px;top:389px;width:49px;text-align:center;font-size:14px;letter-spacing:-0.45px">8196</div>
<div class="t" style="left:632px;top:389px;font-size:14px;letter-spacing:-0.45px">Erlöse aus Geldspielautomaten 19% USt</div>
<div class="t" style="left:942px;top:389px;width:42px;text-align:center;font-size:14px;letter-spacing:-0.45px">H - S</div>
<div class="t" style="left:384px;top:407px;font-size:14px;letter-spacing:-0.45px">B01</div>
<div class="t" style="left:448px;top:407px;font-size:14px;letter-spacing:-0.45px">001. Gesamtleistung</div>
<div class="t" style="left:580px;top:407px;width:49px;text-align:center;font-size:14px;letter-spacing:-0.45px">8200</div>
<div class="t" style="left:632px;top:407px;font-size:14px;letter-spacing:-0.45px">Erlöse</div>
<div class="t" style="left:942px;top:407px;width:42px;text-align:center;font-size:14px;letter-spacing:-0.45px">H - S</div>
<div class="t" style="left:384px;top:425px;font-size:14px;letter-spacing:-0.45px">B01</div>
<div class="t" style="left:448px;top:425px;font-size:14px;letter-spacing:-0.45px">001. Gesamtleistung</div>
<div class="t" style="left:580px;top:425px;width:49px;text-align:center;font-size:14px;letter-spacing:-0.45px">8300</div>
<div class="t" style="left:632px;top:425px;font-size:14px;letter-spacing:-0.45px">Erlöse ermäßigter Steuersatz</div>
<div class="t" style="left:942px;top:425px;width:42px;text-align:center;font-size:14px;letter-spacing:-0.45px">H - S</div>
<div class="t" style="left:384px;top:443px;font-size:14px;letter-spacing:-0.45px">B01</div>
<div class="t" style="left:448px;top:443px;font-size:14px;letter-spacing:-0.45px">001. Gesamtleistung</div>
<div class="t" style="left:580px;top:443px;width:49px;text-align:center;font-size:14px;letter-spacing:-0.45px">8315</div>
<div class="t" style="left:632px;top:443px;font-size:14px;letter-spacing:-0.45px">Erlöse Inland steuerpf. EU-Lief. 19% USt</div>
<div class="t" style="left:942px;top:443px;width:42px;text-align:center;font-size:14px;letter-spacing:-0.45px">H - S</div>
<div class="t" style="left:384px;top:461px;font-size:14px;letter-spacing:-0.45px">B01</div>
<div class="t" style="left:448px;top:461px;font-size:14px;letter-spacing:-0.45px">001. Gesamtleistung</div>
<div class="t" style="left:580px;top:461px;width:49px;text-align:center;font-size:14px;letter-spacing:-0.45px">8320</div>
<div class="t" style="left:632px;top:461px;font-size:14px;letter-spacing:-0.45px">Erlöse im and. EU-Land steuerpf. Liefer.</div>
<div class="t" style="left:942px;top:461px;width:42px;text-align:center;font-size:14px;letter-spacing:-0.45px">H - S</div>
<div class="t" style="left:384px;top:479px;font-size:14px;letter-spacing:-0.45px">B01</div>
<div class="t" style="left:448px;top:479px;font-size:14px;letter-spacing:-0.45px">001. Gesamtleistung</div>
<div class="t" style="left:580px;top:479px;width:49px;text-align:center;font-size:14px;letter-spacing:-0.45px">8325</div>
<div class="t" style="left:632px;top:479px;font-size:14px;letter-spacing:-0.45px">Erlöse im EU-Land erm. steuerpf. Liefer.</div>
<div class="t" style="left:942px;top:479px;width:42px;text-align:center;font-size:14px;letter-spacing:-0.45px">H - S</div>
<div class="t" style="left:384px;top:497px;font-size:14px;letter-spacing:-0.45px">B01</div>
<div class="t" style="left:448px;top:497px;font-size:14px;letter-spacing:-0.45px">001. Gesamtleistung</div>
<div class="t" style="left:580px;top:497px;width:49px;text-align:center;font-size:14px;letter-spacing:-0.45px">8330</div>
<div class="t" style="left:632px;top:497px;font-size:14px;letter-spacing:-0.45px">Erlöse Inland steuerpf. EU-Lief. 16% USt</div>
<div class="t" style="left:942px;top:497px;width:42px;text-align:center;font-size:14px;letter-spacing:-0.45px">H - S</div>
<div class="t" style="left:384px;top:515px;font-size:14px;letter-spacing:-0.45px">B01</div>
<div class="t" style="left:448px;top:515px;font-size:14px;letter-spacing:-0.45px">001. Gesamtleistung</div>
<div class="t" style="left:580px;top:515px;width:49px;text-align:center;font-size:14px;letter-spacing:-0.45px">8336</div>
<div class="t" style="left:632px;top:515px;font-size:14px;letter-spacing:-0.45px">EU-Leistungen mit St.schuldumkehr</div>
<div class="t" style="left:942px;top:515px;width:42px;text-align:center;font-size:14px;letter-spacing:-0.45px">H - S</div>
<div class="t" style="left:384px;top:533px;font-size:14px;letter-spacing:-0.45px">B01</div>
<div class="t" style="left:448px;top:533px;font-size:14px;letter-spacing:-0.45px">001. Gesamtleistung</div>
<div class="t" style="left:580px;top:533px;width:49px;text-align:center;font-size:14px;letter-spacing:-0.45px">8337</div>
<div class="t" style="left:632px;top:533px;font-size:14px;letter-spacing:-0.45px">Umsätze mit St.schuldumkehr § 13b UStG</div>
<div class="t" style="left:942px;top:533px;width:42px;text-align:center;font-size:14px;letter-spacing:-0.45px">H - S</div>
<div class="t" style="left:384px;top:551px;font-size:14px;letter-spacing:-0.45px">B01</div>
<div class="t" style="left:448px;top:551px;font-size:14px;letter-spacing:-0.45px">001. Gesamtleistung</div>
<div class="t" style="left:580px;top:551px;width:49px;text-align:center;font-size:14px;letter-spacing:-0.45px">8338</div>
<div class="t" style="left:632px;top:551px;font-size:14px;letter-spacing:-0.45px">Erl. Drittland st.bar, im Inland nicht</div>
<div class="t" style="left:942px;top:551px;width:42px;text-align:center;font-size:14px;letter-spacing:-0.45px">H - S</div>
<div class="t" style="left:384px;top:569px;font-size:14px;letter-spacing:-0.45px">B01</div>
<div class="t" style="left:448px;top:569px;font-size:14px;letter-spacing:-0.45px">001. Gesamtleistung</div>
<div class="t" style="left:580px;top:569px;width:49px;text-align:center;font-size:14px;letter-spacing:-0.45px">8340</div>
<div class="t" style="left:632px;top:569px;font-size:14px;letter-spacing:-0.45px">Erlöse 16%</div>
<div class="t" style="left:942px;top:569px;width:42px;text-align:center;font-size:14px;letter-spacing:-0.45px">H - S</div>
<div class="t" style="left:384px;top:587px;font-size:14px;letter-spacing:-0.45px">B01</div>
<div class="t" style="left:448px;top:587px;font-size:14px;letter-spacing:-0.45px">001. Gesamtleistung</div>
<div class="t" style="left:580px;top:587px;width:49px;text-align:center;font-size:14px;letter-spacing:-0.45px">8400</div>
<div class="t" style="left:632px;top:587px;font-size:14px;letter-spacing:-0.45px">Erlöse Normalsteuersatz</div>
<div class="t" style="left:942px;top:587px;width:42px;text-align:center;font-size:14px;letter-spacing:-0.45px">H - S</div>
<div class="t" style="left:1052px;top:587px;width:92px;text-align:right;font-size:14px;letter-spacing:-0.45px">63.314,31 €</div>
<div class="t" style="left:1148px;top:587px;width:109px;text-align:right;font-size:14px;letter-spacing:-0.45px">63.314,31 €</div>
<div class="t" style="left:384px;top:605px;font-size:14px;letter-spacing:-0.45px">B01</div>
<div class="t" style="left:448px;top:605px;font-size:14px;letter-spacing:-0.45px">001. Gesamtleistung</div>
<div class="t" style="left:580px;top:605px;width:49px;text-align:center;font-size:14px;letter-spacing:-0.45px">8410</div>
<div class="t" style="left:632px;top:605px;font-size:14px;letter-spacing:-0.45px">Erlöse 19%</div>
<div class="t" style="left:942px;top:605px;width:42px;text-align:center;font-size:14px;letter-spacing:-0.45px">H - S</div>
<div class="t" style="left:384px;top:623px;font-size:14px;letter-spacing:-0.45px">B01</div>
<div class="t" style="left:448px;top:623px;font-size:14px;letter-spacing:-0.45px">001. Gesamtleistung</div>
<div class="t" style="left:580px;top:623px;width:49px;text-align:center;font-size:14px;letter-spacing:-0.45px">8514</div>
<div class="t" style="left:632px;top:623px;font-size:14px;letter-spacing:-0.45px">Provisionsums., st.frei § 4 Nr. 8ff UStG</div>
<div class="t" style="left:942px;top:623px;width:42px;text-align:center;font-size:14px;letter-spacing:-0.45px">H - S</div>
<div class="t" style="left:384px;top:641px;font-size:14px;letter-spacing:-0.45px">B01</div>
<div class="t" style="left:448px;top:641px;font-size:14px;letter-spacing:-0.45px">001. Gesamtleistung</div>
<div class="t" style="left:580px;top:641px;width:49px;text-align:center;font-size:14px;letter-spacing:-0.45px">8515</div>
<div class="t" style="left:632px;top:641px;font-size:14px;letter-spacing:-0.45px">Provisionsums., st.frei § 4 Nr. 5 UStG</div>
<div class="t" style="left:942px;top:641px;width:42px;text-align:center;font-size:14px;letter-spacing:-0.45px">H - S</div>
<div class="t" style="left:384px;top:659px;font-size:14px;letter-spacing:-0.45px">B01</div>
<div class="t" style="left:448px;top:659px;font-size:14px;letter-spacing:-0.45px">001. Gesamtleistung</div>
<div class="t" style="left:580px;top:659px;width:49px;text-align:center;font-size:14px;letter-spacing:-0.45px">8516</div>
<div class="t" style="left:632px;top:659px;font-size:14px;letter-spacing:-0.45px">Provisionsumsätze 7% USt</div>
<div class="t" style="left:942px;top:659px;width:42px;text-align:center;font-size:14px;letter-spacing:-0.45px">H - S</div>
<div class="t" style="left:384px;top:677px;font-size:14px;letter-spacing:-0.45px">B01</div>
<div class="t" style="left:448px;top:677px;font-size:14px;letter-spacing:-0.45px">001. Gesamtleistung</div>
<div class="t" style="left:580px;top:677px;width:49px;text-align:center;font-size:14px;letter-spacing:-0.45px">8520</div>
<div class="t" style="left:632px;top:677px;font-size:14px;letter-spacing:-0.45px">Erlöse Abfallverwertung</div>
<div class="t" style="left:942px;top:677px;width:42px;text-align:center;font-size:14px;letter-spacing:-0.45px">H - S</div>
<div class="t" style="left:384px;top:695px;font-size:14px;letter-spacing:-0.45px">B01</div>
<div class="t" style="left:448px;top:695px;font-size:14px;letter-spacing:-0.45px">001. Gesamtleistung</div>
<div class="t" style="left:580px;top:695px;width:49px;text-align:center;font-size:14px;letter-spacing:-0.45px">8700</div>
<div class="t" style="left:632px;top:695px;font-size:14px;letter-spacing:-0.45px">Erlösschmälerungen</div>
<div class="t" style="left:942px;top:695px;width:42px;text-align:center;font-size:14px;letter-spacing:-0.45px">H - S</div>
<div class="t" style="left:384px;top:713px;font-size:14px;letter-spacing:-0.45px">B01</div>
<div class="t" style="left:448px;top:713px;font-size:14px;letter-spacing:-0.45px">001. Gesamtleistung</div>
<div class="t" style="left:580px;top:713px;width:49px;text-align:center;font-size:14px;letter-spacing:-0.45px">8710</div>
<div class="t" style="left:632px;top:713px;font-size:14px;letter-spacing:-0.45px">Erlösschmälerungen ermäßigter Steuersatz</div>
<div class="t" style="left:942px;top:713px;width:42px;text-align:center;font-size:14px;letter-spacing:-0.45px">H - S</div>
<div class="a" style="left:1261px;top:136px;width:18px;height:595px;background:repeating-conic-gradient(#f0f0f0 0 25%,#fdfdfd 0 50%) 0 0/2px 2px"></div>
<div class="a" style="left:1261px;top:136px;width:18px;height:17px;background:#f0f0f0"></div>
<svg class="a" style="left:1265px;top:139px" width="10" height="10" viewBox="0 0 10 10"><path d="M2.3 8.2L5.5 4.2 8.7 8.2" fill="none" stroke="#505050" stroke-width="2"/></svg>
<div class="a" style="left:1262px;top:153px;width:17px;height:366px;border:1px solid #a0a0a0;background:#f0f0f0"></div>
<div class="a" style="left:1261px;top:714px;width:18px;height:17px;background:#f0f0f0"></div>
<svg class="a" style="left:1265px;top:717px" width="10" height="10" viewBox="0 0 10 10"><path d="M2.3 3.6L5.5 7.6 8.7 3.6" fill="none" stroke="#505050" stroke-width="2"/></svg>
<div class="a" style="left:365px;top:731px;width:914px;height:19px;border-top:1px solid #696969;border-bottom:1px solid #696969;background:#f0f0f0"></div>
<div class="a" style="left:365px;top:732px;width:19px;height:17px;border-right:1px solid #696969;box-shadow:inset 1px 1px #fff, inset -1px -1px #a0a0a0"></div>
<div class="a" style="left:384px;top:732px;width:19px;height:17px;border-right:1px solid #696969;box-shadow:inset 1px 1px #fff, inset -1px -1px #a0a0a0"></div>
<div class="a" style="left:403px;top:732px;width:839px;height:17px;border-right:1px solid #696969;box-shadow:inset 1px 1px #fff, inset -1px -1px #a0a0a0"></div>
<div class="a" style="left:1242px;top:732px;width:19px;height:17px;border-right:1px solid #696969;box-shadow:inset 1px 1px #fff, inset -1px -1px #a0a0a0"></div>
<div class="a" style="left:1261px;top:732px;width:19px;height:17px;border-right:1px solid #696969;box-shadow:inset 1px 1px #fff, inset -1px -1px #a0a0a0"></div>
<svg class="a" style="left:365px;top:731px" width="915" height="19" viewBox="365 731 915 19"><path d="M370 735h2v11h-2z M379 735v11l-6-5.5z M396 735v11l-6.2-5.5z M1248 735v11l6 -5.5z M1266 735v11l6-5.5z M1273 735h2v11h-2z" fill="#000"/></svg>
<div class="t" style="left:407px;top:736px;font-size:11px;letter-spacing:-0.2px">SQL TOP 1000 Datensatz 1 von 49 gelesenen</div>
<div class="a" style="left:0;top:752px;width:1047px;height:18px;border-top:1px solid #a0a0a0;border-left:1px solid #a0a0a0"></div>
<div class="a" style="left:1050px;top:752px;width:50px;height:18px;border-top:1px solid #a0a0a0;border-left:1px solid #a0a0a0"></div>
<div class="t" style="left:1050px;top:756px;width:50px;text-align:center;font-size:11px;letter-spacing:-0.1px">02/2019</div>
<div class="a" style="left:1103px;top:752px;width:38px;height:18px;border-top:1px solid #a0a0a0;border-left:1px solid #a0a0a0"></div>
<div class="t" style="left:1103px;top:756px;width:38px;text-align:center;font-size:11px;letter-spacing:-0.1px">NUM</div>
<div class="a" style="left:1144px;top:752px;width:115px;height:18px;border-top:1px solid #a0a0a0;border-left:1px solid #a0a0a0"></div>
<div class="t" style="left:1144px;top:756px;width:115px;text-align:left;padding-left:4px;font-size:12px;letter-spacing:-0.1px">admin - Mosaik.mdb</div>
</body></html>
